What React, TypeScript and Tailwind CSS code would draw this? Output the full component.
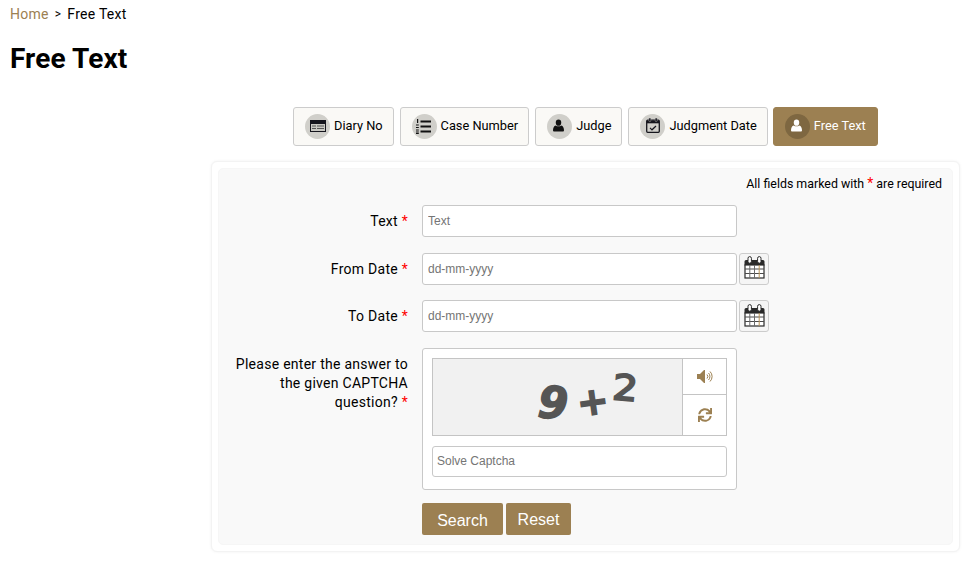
import { FaSync } from "react-icons/fa";
import type { ReactNode } from "react";

const BROWN = "#9c8052";

function DiaryIcon() {
  return (
    <svg className="relative top-[-1px]" width="16" height="12" viewBox="0 0 16 12">
      <rect x="0.5" y="0.5" width="15" height="11" fill="#c9c8c2" stroke="#15151d" />
      <rect x="1" y="1" width="14" height="3" fill="#15151d" />
      <rect x="2" y="5.5" width="4" height="1" fill="#555" />
      <rect x="7" y="5.5" width="7" height="1" fill="#555" />
      <rect x="2" y="8" width="4" height="1" fill="#555" />
      <rect x="7" y="8" width="7" height="1" fill="#555" />
    </svg>
  );
}

function ListIcon() {
  return (
    <svg className="relative left-[-1px]" width="15" height="15" viewBox="0 0 15 15" fill="#111">
      <rect x="4.5" y="1.5" width="10.5" height="2" />
      <rect x="4.5" y="6.5" width="10.5" height="2" />
      <rect x="4.5" y="11.5" width="10.5" height="2" />
      <rect x="1" y="0" width="1.2" height="4" />
      <rect x="0" y="5.5" width="2.8" height="1" />
      <rect x="0" y="8" width="2.8" height="1" />
      <rect x="0" y="10.5" width="2.8" height="1" />
      <rect x="0" y="12.5" width="2.8" height="1" />
      <rect x="0" y="14" width="2.8" height="1" />
    </svg>
  );
}

function UserIcon({ color = "#111" }: { color?: string }) {
  return (
    <svg className="relative left-[-1px] top-[-1px]" width="11" height="13" viewBox="0 0 12 13" fill={color}>
      <ellipse cx="6" cy="3.4" rx="3" ry="3.4" />
      <path d="M1 13c-.6 0-1-.4-1-1 0-3 1-5.2 3-5.6.8.7 1.8 1 3 1s2.2-.3 3-1c2 .4 3 2.6 3 5.6 0 .6-.4 1-1 1z" />
    </svg>
  );
}

function CheckCalIcon() {
  return (
    <svg className="relative top-[-1px]" width="14" height="15" viewBox="0 0 14 15" fill="none">
      <rect x="0.7" y="2.2" width="12.6" height="12.1" rx="1" stroke="#15151d" strokeWidth="1.3" />
      <rect x="1" y="2.5" width="12" height="2.8" fill="#15151d" />
      <rect x="2.8" y="0" width="2" height="3.6" rx="0.8" fill="#15151d" stroke="#d0cfca" strokeWidth="0.4" />
      <rect x="9.2" y="0" width="2" height="3.6" rx="0.8" fill="#15151d" stroke="#d0cfca" strokeWidth="0.4" />
      <path d="M4 9.8l2 2 4-3.8" stroke="#15151d" strokeWidth="1.2" />
    </svg>
  );
}

function CalendarIcon() {
  return (
    <svg className="relative top-[-1px]" width="21" height="23" viewBox="0 0 21 23">
      <path d="M0.5 5.5a1.5 1.5 0 0 1 1.5-1.5h17a1.5 1.5 0 0 1 1.5 1.5V9.5H.5z" fill="#2a2a2a" />
      <rect x="1" y="9" width="19" height="13" fill="#fff" stroke="#2a2a2a" strokeWidth="1.2" />
      <path d="M1 13h19M1 17.5h19" stroke="#4a4a4a" strokeWidth="1" />
      <path d="M5.8 9v13M10.5 9v13" stroke="#6a6a6a" strokeWidth="1" />
      <path d="M15.2 9v13" stroke="#b9945a" strokeWidth="1" />
      <rect x="4" y="0.6" width="3.4" height="6.6" rx="1.7" fill="#fff" stroke="#2a2a2a" />
      <rect x="13.6" y="0.6" width="3.4" height="6.6" rx="1.7" fill="#fff" stroke="#2a2a2a" />
    </svg>
  );
}

function SpeakerIcon() {
  return (
    <svg width="16" height="13" viewBox="0 0 16 13" fill="none">
      <path d="M0 4h3l4-4h1v13H7L3 9H0z" fill={BROWN} />
      <path d="M10 4.5a3 3 0 0 1 0 4" stroke={BROWN} strokeWidth="1" />
      <path d="M11.5 3a5 5 0 0 1 0 7" stroke={BROWN} strokeWidth="1" />
      <path d="M13 1.5a7 7 0 0 1 0 10" stroke={BROWN} strokeWidth="1" />
    </svg>
  );
}

function Tab({ icon, label, active }: { icon: ReactNode; label: string; active?: boolean }) {
  return (
    <div
      className={
        active
          ? "-ml-[1px] flex h-[39px] items-center gap-[4px] rounded-[3px] border border-[#9c8052] bg-[#9c8052] pl-[11px] pr-[11px] text-white"
          : "flex h-[39px] items-center gap-[4px] rounded-[3px] border border-[#cccccc] bg-[#faf9f6] pl-[11px] pr-[10px] text-black"
      }
    >
      <span
        className={
          active
            ? "flex h-[25px] w-[25px] items-center justify-center rounded-full bg-[#7e6741]"
            : "flex h-[25px] w-[25px] items-center justify-center rounded-full bg-[#d0cfca]"
        }
      >
        {icon}
      </span>
      <span className="relative top-[-1px] text-[12.8px]">{label}</span>
    </div>
  );
}

function Label({ children }: { children: ReactNode }) {
  return (
    <div className="w-[189px] pt-[1px] text-right text-[14px] leading-[19px] tracking-[0.27px] text-black">
      {children} <span className="text-[#ff0000]">*</span>
    </div>
  );
}

function TextInput({ placeholder }: { placeholder: string }) {
  return (
    <input
      placeholder={placeholder}
      className="h-[32px] w-[315px] rounded-[3px] border border-[#c8c8c8] bg-white px-[5px] font-['Liberation_Sans',sans-serif] text-[12px] placeholder:text-[#757575]"
    />
  );
}

function DateRow({ label }: { label: string }) {
  return (
    <div className="flex items-center gap-[14px]">
      <Label>{label}</Label>
      <div className="flex items-center gap-[2px]">
        <TextInput placeholder="dd-mm-yyyy" />
        <div className="flex h-[32px] w-[30px] items-center justify-center rounded-[3px] border border-[#cccccc] bg-[#f5f5f5]">
          <CalendarIcon />
        </div>
      </div>
    </div>
  );
}

export default function App() {
  return (
    <div className="h-[567px] w-[974px] overflow-hidden bg-white font-['Roboto',sans-serif]">
      <div className="flex items-center gap-[6px] pl-[10px] pt-[5px] text-[14px] leading-[19px] tracking-[0.27px]">
        <span className="text-[#9c8052]">Home</span>
        <span className="text-[12px] text-black">&gt;</span>
        <span className="text-black">Free Text</span>
      </div>
      <h1 className="mt-[16px] pl-[10px] text-[28px] font-bold leading-[38px] tracking-[0.1px] text-black">Free Text</h1>

      <div className="mt-[29px] flex gap-[6px] pl-[293px]">
        <Tab icon={<DiaryIcon />} label="Diary No" />
        <Tab icon={<ListIcon />} label="Case Number" />
        <Tab icon={<UserIcon />} label="Judge" />
        <Tab icon={<CheckCalIcon />} label="Judgment Date" />
        <Tab icon={<UserIcon color="#ffffff" />} label="Free Text" active />
      </div>

      <div className="ml-[211px] mt-[15px] h-[391px] w-[749px] rounded-[6px] border border-[#f3f3f3] bg-white p-[6px] shadow-[0_0_3px_rgba(0,0,0,0.06)]">
        <div className="h-[377px] rounded-[5px] border border-[#f6f6f6] bg-[#f9f9f9]">
          <div className="h-[23px] pr-[10px] pt-[7px] text-right text-[12.4px] leading-[16px] text-black">
            All fields marked with <span className="text-[14px] leading-[0] text-[#ff0000]">*</span> are required
          </div>

          <div className="mt-[13px] flex flex-col gap-[15.5px]">
            <div className="flex items-center gap-[14px]">
              <Label>Text</Label>
              <TextInput placeholder="Text" />
            </div>
            <DateRow label="From Date" />
            <DateRow label="To Date" />

            <div className="flex items-start gap-[14px]">
              <div className="pt-[6px]">
                <Label>
                  Please enter the answer to
                  <br />
                  the given CAPTCHA
                  <br />
                  question?
                </Label>
              </div>
              <div className="h-[142px] w-[315px] rounded-[3px] border border-[#c8c8c8] bg-white px-[9px] pt-[9px]">
                <div className="flex h-[78px]">
                  <div className="h-[78px] w-[251px] border border-[#c4c4c4] bg-[#f1f1f1]">
                    <svg width="249" height="76" viewBox="0 0 249 76">
                      <text
                        x="105"
                        y="59"
                        fill="#555"
                        stroke="#555"
                        strokeWidth="1.5"
                        fontFamily="DejaVu Sans, sans-serif"
                        fontWeight="700"
                        fontStyle="italic"
                        fontSize="44"
                        textLength="30"
                        lengthAdjust="spacingAndGlyphs"
                        transform="rotate(4 118 45)"
                      >
                        9
                      </text>
                      <text x="144" y="56" fill="#555" stroke="#555" strokeWidth="1.5" fontFamily="DejaVu Sans, sans-serif" fontWeight="700" fontSize="38" transform="rotate(-8 157 45)">
                        +
                      </text>
                      <text
                        x="180"
                        y="41"
                        fill="#555"
                        stroke="#555"
                        strokeWidth="2"
                        fontFamily="DejaVu Sans, sans-serif"
                        fontWeight="400"
                        fontSize="35"
                        textLength="25"
                        lengthAdjust="spacingAndGlyphs"
                        transform="rotate(5 192 25)"
                      >
                        2
                      </text>
                    </svg>
                  </div>
                  <div className="flex w-[44px] flex-col border-y border-r border-[#c4c4c4]">
                    <div className="flex h-[36px] items-center justify-center border-b border-[#c4c4c4]">
                      <SpeakerIcon />
                    </div>
                    <div className="flex flex-1 items-center justify-center">
                      <FaSync size={14} color={BROWN} />
                    </div>
                  </div>
                </div>
                <input
                  placeholder="Solve Captcha"
                  className="mt-[10px] h-[31px] w-[295px] rounded-[3px] border border-[#c8c8c8] bg-white px-[4px] font-['Liberation_Sans',sans-serif] text-[12px] placeholder:text-[#757575]"
                />
              </div>
            </div>
          </div>

          <div className="ml-[203px] mt-[13px] flex gap-[3px] font-['Liberation_Sans',sans-serif] text-[16px] text-white">
            <button className="h-[32px] w-[81px] rounded-[2px] bg-[#9c8052] pt-[5px]">Search</button>
            <button className="h-[32px] w-[65px] rounded-[2px] bg-[#9c8052] pt-[2px]">Reset</button>
          </div>
        </div>
      </div>
    </div>
  );
}
